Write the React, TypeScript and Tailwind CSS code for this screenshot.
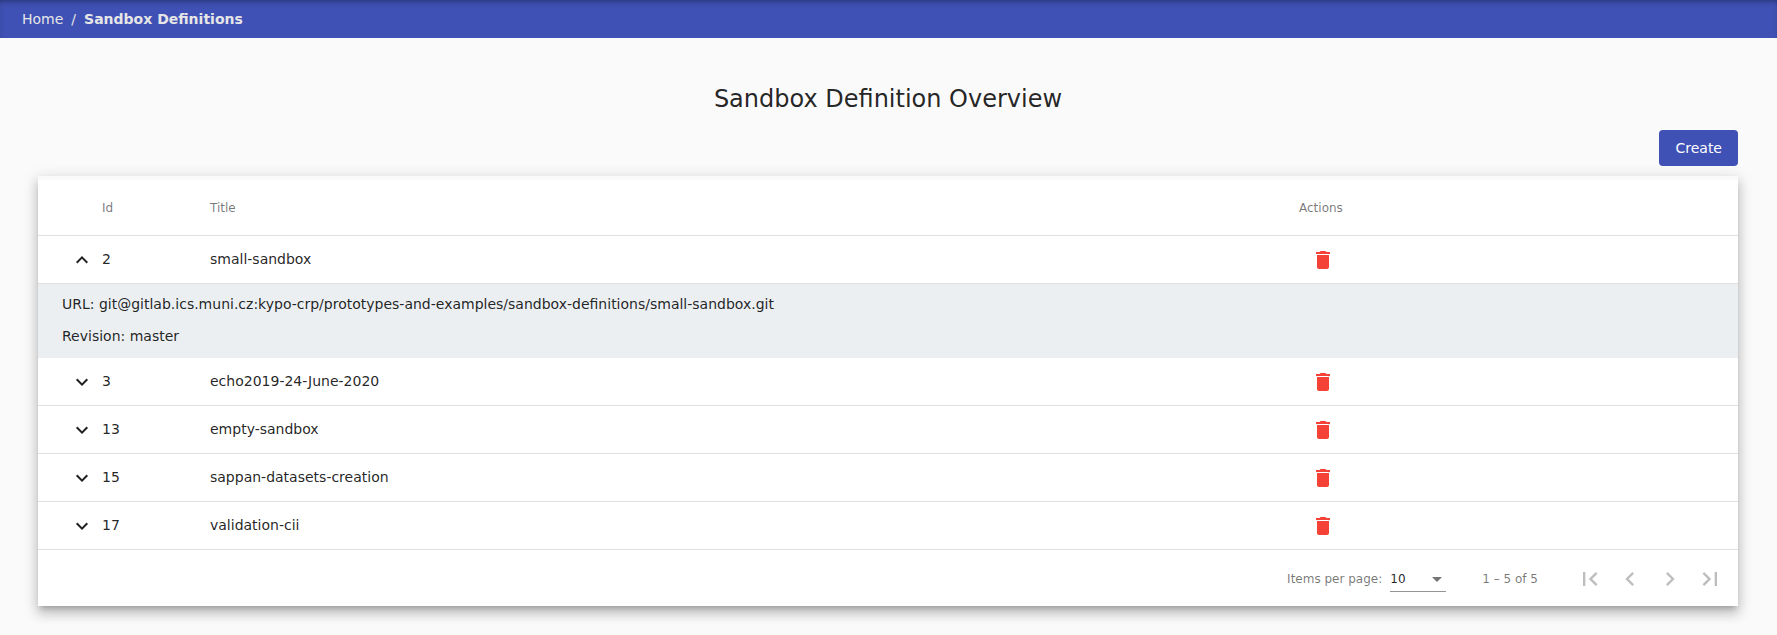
import { Fragment, useState } from "react";

interface SandboxDefinition {
  id: number;
  title: string;
  url: string;
  revision: string;
}

const REPOSITORY = "git@gitlab.ics.muni.cz:kypo-crp/prototypes-and-examples/sandbox-definitions/";

const DEFINITIONS: SandboxDefinition[] = [
  "2:small-sandbox",
  "3:echo2019-24-June-2020",
  "13:empty-sandbox",
  "15:sappan-datasets-creation",
  "17:validation-cii",
].map((entry) => {
  const [id, title] = entry.split(":");
  return { id: Number(id), title, url: `${REPOSITORY}${title}.git`, revision: "master" };
});

const ICONS = {
  expandLess: "M12 8l-6 6 1.41 1.41L12 10.83l4.59 4.58L18 14z",
  expandMore: "M16.59 8.59L12 13.17 7.41 8.59 6 10l6 6 6-6z",
  remove: "M6 19c0 1.1.9 2 2 2h8c1.1 0 2-.9 2-2V7H6v12zM19 4h-3.5l-1-1h-5l-1 1H5v2h14V4z",
  first: "M18.41 16.59L13.82 12l4.59-4.59L17 6l-6 6 6 6zM6 6h2v12H6z",
  previous: "M15.41 7.41L14 6l-6 6 6 6 1.41-1.41L10.83 12z",
  next: "M10 6L8.59 7.41 13.17 12l-4.58 4.59L10 18l6-6z",
  last: "M5.59 7.41L10.18 12l-4.59 4.59L7 18l6-6-6-6zM16 6h2v12h-2z",
};

function Icon({ name, className }: { name: keyof typeof ICONS; className: string }) {
  return (
    <svg viewBox="0 0 24 24" fill="currentColor" aria-hidden="true" className={className}>
      <path d={ICONS[name]} />
    </svg>
  );
}

function PageButton({ icon, label }: { icon: keyof typeof ICONS; label: string }) {
  return (
    <button type="button" disabled aria-label={label} className="flex size-10 items-center justify-center text-black/26">
      <Icon name={icon} className="size-7" />
    </button>
  );
}

export default function App() {
  const [expanded, setExpanded] = useState<number | null>(2);

  return (
    <div className="min-h-screen bg-[#fafafa] pb-6 font-['DejaVu_Sans',sans-serif] text-sm text-black/87">
      <nav
        aria-label="Breadcrumb"
        className="flex h-[38px] items-center gap-2 bg-[#3f51b5] px-[22px] text-[#e6e6e6] shadow-[inset_0_4px_6px_-3px_rgba(0,0,0,0.4)]"
      >
        <a href="#home">Home</a>
        <span>/</span>
        <a href="#definitions" aria-current="page" className="font-bold">
          Sandbox Definitions
        </a>
      </nav>

      <main className="pt-[45px] pr-[39px] pl-[38px]">
        <h1 className="text-center text-2xl leading-8">Sandbox Definition Overview</h1>
        <div className="mt-[15px] flex justify-end">
          <button type="button" className="h-9 rounded bg-[#3f51b5] px-4 text-white">
            Create
          </button>
        </div>

        <section className="mt-[10px] bg-white shadow-[0_5px_5px_-3px_rgba(0,0,0,0.2),0_8px_10px_1px_rgba(0,0,0,0.14),0_3px_14px_2px_rgba(0,0,0,0.12)]">
          <div className="h-1 bg-[#fafafa]" />
          <table className="w-full table-fixed border-separate border-spacing-0 text-left">
            <thead>
              <tr className="h-14 text-xs text-black/54">
                <th className="w-16 border-b border-black/12" aria-label="Details" />
                <th className="w-[108px] border-b border-black/12 font-normal">Id</th>
                <th className="border-b border-black/12 font-normal">Title</th>
                <th className="w-[439px] border-b border-black/12 font-normal">Actions</th>
              </tr>
            </thead>
            <tbody>
              {DEFINITIONS.map((item) => {
                const open = expanded === item.id;
                return (
                  <Fragment key={item.id}>
                    <tr className="h-12">
                      <td className="border-b border-black/12 p-0 pl-8">
                        <button
                          type="button"
                          aria-expanded={open}
                          aria-label={`Details of ${item.title}`}
                          onClick={() => setExpanded(open ? null : item.id)}
                          className="block"
                        >
                          <Icon name={open ? "expandLess" : "expandMore"} className="size-6" />
                        </button>
                      </td>
                      <td className="border-b border-black/12 p-0 pb-0.5">{item.id}</td>
                      <td className="border-b border-black/12 p-0 pb-0.5">{item.title}</td>
                      <td className="border-b border-black/12 p-0 pl-3">
                        <button type="button" aria-label={`Delete ${item.title}`} className="block text-[#f44336]">
                          <Icon name="remove" className="size-6" />
                        </button>
                      </td>
                    </tr>
                    {open && (
                      <tr>
                        <td colSpan={4} className="bg-[#ebeff2] px-6 pt-[10px] pb-3">
                          <p>URL: {item.url}</p>
                          <p className="mt-3">Revision: {item.revision}</p>
                        </td>
                      </tr>
                    )}
                  </Fragment>
                );
              })}
            </tbody>
          </table>

          <footer className="flex h-14 items-center justify-end pt-0.5 pr-2 text-xs text-black/54">
            <label htmlFor="page-size">Items per page:</label>
            <div className="relative ml-2 border-b border-black/42">
              <select id="page-size" defaultValue="10" className="block h-6 w-14 appearance-none text-black/87">
                <option>5</option>
                <option>10</option>
                <option>20</option>
              </select>
              <svg
                viewBox="0 0 10 5"
                fill="currentColor"
                aria-hidden="true"
                className="pointer-events-none absolute top-2.5 right-1 h-[5px] w-[10px]"
              >
                <path d="M0 0h10L5 5z" />
              </svg>
            </div>
            <span className="mr-8 ml-9">1 – 5 of 5</span>
            <PageButton icon="first" label="First page" />
            <PageButton icon="previous" label="Previous page" />
            <PageButton icon="next" label="Next page" />
            <PageButton icon="last" label="Last page" />
          </footer>
        </section>
      </main>
    </div>
  );
}
